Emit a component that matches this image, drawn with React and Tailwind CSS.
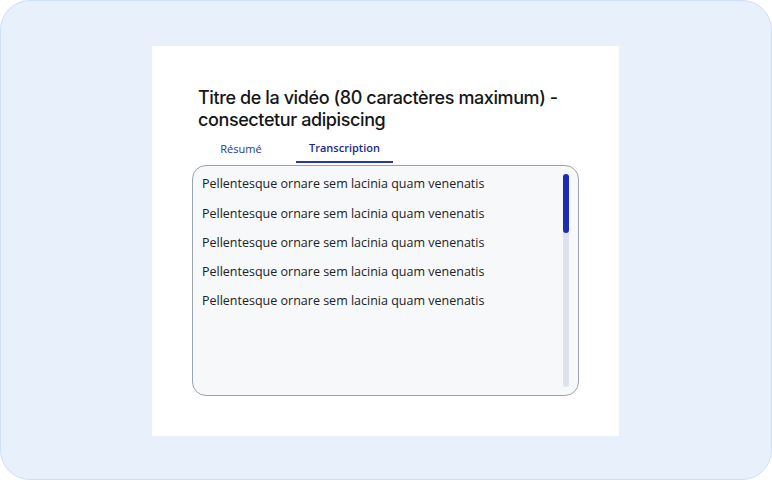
import React from 'react';

const lines = [
  'Pellentesque ornare sem lacinia quam venenatis',
  'Pellentesque ornare sem lacinia quam venenatis',
  'Pellentesque ornare sem lacinia quam venenatis',
  'Pellentesque ornare sem lacinia quam venenatis',
  'Pellentesque ornare sem lacinia quam venenatis',
];

const App = () => {
  return (
    <div className="w-[772px] h-[480px] pt-[2px] pr-[1px] bg-[#e7f0fb] border border-[#cddff6] rounded-[30px] flex items-center justify-center">
      <div className="w-[467px] h-[390px] bg-white px-10 pt-[41px]">
        {/* Title */}
        <h1 className="ml-[6px] text-[18px] leading-[22px] font-medium text-[#161616] font-['Inter',sans-serif] tracking-[-0.4px]">
          Titre de la vidéo (80 caractères maximum) - consectetur adipiscing
        </h1>

        {/* Tabs */}
        <div className="mt-[5px] ml-[6px] flex gap-[12px] font-['Open_Sans',sans-serif] text-[11px]">
          <button className="w-[86px] h-[27px] flex items-center justify-center text-[#24359a]">
            Résumé
          </button>
          <button className="w-[97px] h-[27px] flex items-center justify-center text-[#1a2a8c] font-semibold border-b-2 border-[#2536b0]">
            Transcription
          </button>
        </div>

        {/* Transcript box */}
        <div className="mt-[2px] w-[387px] h-[231px] rounded-[14px] border border-[#9aa3ae] bg-[#f6f8fa] flex">
          <div className="flex-1 pl-[9px] pt-[4px] font-['Open_Sans',sans-serif] text-[12.5px] text-[#222222]">
            {lines.map((line, i) => (
              <div key={i} className="h-[29.25px] flex items-center">
                {line}
              </div>
            ))}
          </div>
          <div className="w-[6px] mr-[9px] my-[8px] rounded-full bg-[#dde3ec] flex flex-col">
            <div className="h-[59px] rounded-full bg-[#1a2cb8]" />
          </div>
        </div>
      </div>
    </div>
  );
};

export default App;
